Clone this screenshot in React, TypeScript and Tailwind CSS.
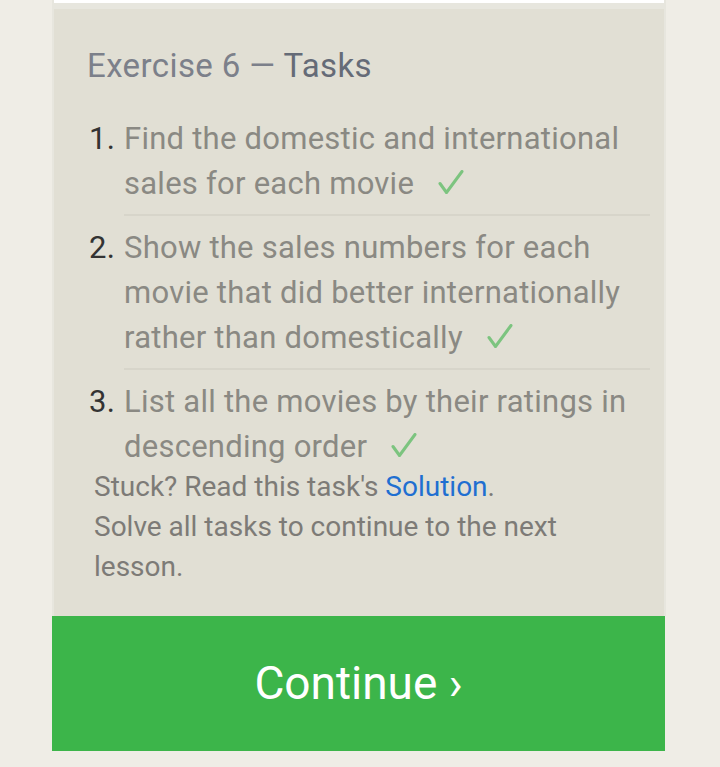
import React from "react";

const tasks = [
    { n: "1.", text: "Find the domestic and international sales for each movie" },
    { n: "2.", text: "Show the sales numbers for each movie that did better internationally rather than domestically" },
    { n: "3.", text: "List all the movies by their ratings in descending order" },
];

function Check() {
    return (
        <svg width="26" height="24" viewBox="0 0 26 24" className="ml-[24px] inline-block align-baseline">
            <path d="M2 13.5 L8.5 22.5 L24 1.5" fill="none" stroke="#7cc47f" strokeWidth="3" strokeLinecap="round" strokeLinejoin="round" />
        </svg>
    );
}

export default function App() {
    return (
        <div className="min-h-[767px] bg-[#efede6] font-['Roboto',sans-serif]">
            <div className="ml-[52px] w-[614px] bg-[#e7e6de] px-[2px]">
                <div className="h-[3px] bg-white" />
                <div className="mt-[6px] bg-[#e1dfd4] pt-[37px] pb-[29px] pl-[33px] pr-[14px]">
                    <h2 className="text-[33px] leading-[40px] tracking-[0.4px] text-[#7c808a]">
                        Exercise 6 — <span className="text-[#656b77]">Tasks</span>
                    </h2>
                    <ol className="mt-[30px]">
                        {tasks.map((t, i) => (
                            <li key={t.n} className="flex text-[31px] leading-[45px] tracking-[0.25px]">
                                <span className="w-[37px] shrink-0 pl-[2px] text-[#333333]">{t.n}</span>
                                <div className="flex-1">
                                    <p className={i < tasks.length - 1 ? "pb-[8px] text-[#8a8983]" : "text-[#8a8983]"}>
                                        {t.text}
                                        <Check />
                                    </p>
                                    {i < tasks.length - 1 && (
                                        <div className="mb-[9px] h-[2px] bg-[#d7d5ca]" />
                                    )}
                                </div>
                            </li>
                        ))}
                    </ol>
                    <div className="-mt-[2px] pl-[7px] text-[28px] leading-[40px] text-[#7d7b77]">
                        <p>
                            Stuck? Read this task's <span className="text-[#1f6fd1]">Solution</span>.
                        </p>
                        <p className="max-w-[520px]">Solve all tasks to continue to the next lesson.</p>
                    </div>
                </div>
            </div>
            <button className="ml-[52px] flex h-[135px] w-[613px] items-center justify-center bg-[#3cb54a] text-[46px] text-white">
                Continue ›
            </button>
        </div>
    );
}
